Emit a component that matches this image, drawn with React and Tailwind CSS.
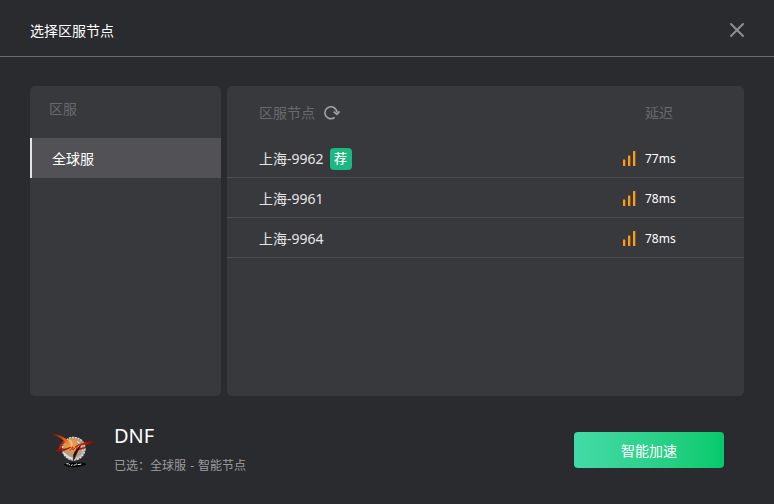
import { X } from 'lucide-react';

const regions = [{ id: 'global', name: '全球服' }];

const nodes = [
    { id: 1, name: '上海-9962', delay: 77, recommended: true },
    { id: 2, name: '上海-9961', delay: 78, recommended: false },
    { id: 3, name: '上海-9964', delay: 78, recommended: false },
];

const SignalIcon = () => (
    <svg width="13" height="16" viewBox="0 0 13 16" fill="#ff9c13" aria-hidden="true">
        <rect x="0" y="8.5" width="2.3" height="6.5" rx="0.5" />
        <rect x="5" y="4.5" width="2.3" height="10.5" rx="0.5" />
        <rect x="10" y="0" width="2.3" height="15" rx="0.5" />
    </svg>
);

const RefreshIcon = () => (
    <svg width="18" height="16" viewBox="0 0 18 16" fill="none" aria-hidden="true">
        <path d="M11.6 12.5A6 6 0 1 1 13.9 7.6" stroke="#a3a3a6" strokeWidth="1.6" />
        <path d="M10.6 6.6L13.9 9.4L16.6 6.4" stroke="#a3a3a6" strokeWidth="1.6" />
    </svg>
);

const GameLogo = () => (
    <svg width="48" height="40" viewBox="30 30 144 120" fill="none" aria-hidden="true">
        <defs>
            <radialGradient id="globe" cx="0.42" cy="0.35" r="0.65">
                <stop offset="0" stopColor="#f0a050" />
                <stop offset="0.5" stopColor="#cf965f" />
                <stop offset="0.8" stopColor="#b09c8c" />
                <stop offset="1" stopColor="#c9c5c1" />
            </radialGradient>
            <linearGradient id="slash" x1="36" y1="42" x2="84" y2="82" gradientUnits="userSpaceOnUse">
                <stop offset="0" stopColor="#7a0d05" />
                <stop offset="0.5" stopColor="#e0470c" />
                <stop offset="1" stopColor="#ff9a1c" />
            </linearGradient>
            <linearGradient id="wing" x1="84" y1="0" x2="168" y2="0" gradientUnits="userSpaceOnUse">
                <stop offset="0" stopColor="#b51c06" />
                <stop offset="0.5" stopColor="#c92308" />
                <stop offset="1" stopColor="#6d0703" />
            </linearGradient>
        </defs>
        <circle cx="101" cy="86" r="33" fill="url(#globe)" />
        <circle cx="101" cy="86" r="34" stroke="#dedbd8" strokeWidth="4" strokeDasharray="7 2" />
        <path d="M72 100Q82 112 97 116" stroke="#e6e2de" strokeWidth="5" />
        <path d="M112 64Q128 76 127 94" stroke="#dccabb" strokeWidth="5" />
        <path d="M88 60Q98 68 94 80" stroke="#f6bf7c" strokeWidth="5" />
        <path d="M34 41Q60 44 78 57Q90 67 88 82Q77 64 62 53Q50 47 34 41Z" fill="url(#slash)" stroke="url(#slash)" strokeWidth="1.5" />
        <path d="M73 64Q61 78 56 93" stroke="#c62a08" strokeWidth="7" />
        <path d="M48 93Q72 96 92 82Q76 90 56 87Z" fill="#9c1005" stroke="#9c1005" strokeWidth="2" />
        <path d="M90 92Q95 84 98 80L99 90Q106 82 112 78L109 90" stroke="#c62a08" strokeWidth="3" />
        <path d="M106 80Q126 64 168 65Q148 73 124 75Q114 76 106 80Z" fill="url(#wing)" stroke="url(#wing)" strokeWidth="2" />
        <path d="M108 90Q122 82 140 82Q128 88 108 90Z" fill="#c1240a" stroke="#8d1005" strokeWidth="2" />
        <path d="M122 76Q112 94 101 120Q98 104 106 94Z" fill="#1c0d0a" stroke="#2a0d08" strokeWidth="2" />
        <path d="M71 133Q90 126 112 128Q138 126 138 134Q120 142 98 142Q76 140 71 133Z" fill="#050506" />
        <path d="M79 131L86 132L90 136M94 138L97 133M101 136L107 134L111 131M113 134L124 132" stroke="#e6e6e6" strokeWidth="3" />
    </svg>
);

const App = () => {
    return (
        <div className="min-h-screen flex flex-col bg-[#2a2b2f] text-white text-sm font-['Noto_Sans','Noto_Sans_CJK_SC',sans-serif]">
            <header className="h-[57px] pl-[30px] pr-7 pt-1 flex items-center justify-between border-b border-[#6b6b6e]">
                <h1 className="pt-0.5">选择区服节点</h1>
                <button type="button" aria-label="关闭" className="text-[#8e8f92]">
                    <X size={18} viewBox="3 3 18 18" strokeWidth={2} />
                </button>
            </header>

            <main className="flex-1 flex gap-1.5 px-[30px] pt-[29px]">
                <nav className="w-[191px] shrink-0 rounded-[5px] bg-[#38393d]">
                    <h2 className="h-[52px] pl-[19px] pt-3 leading-[22px] text-[#68696d]">区服</h2>
                    {regions.map((region) => (
                        <button
                            key={region.id}
                            type="button"
                            className="w-full h-10 pl-5 pt-0.5 text-left bg-[#525155] border-l-2 border-[#e4e4e4]"
                        >
                            {region.name}
                        </button>
                    ))}
                </nav>

                <section className="flex-1 rounded-[5px] bg-[#38393d]">
                    <table className="w-full table-fixed border-separate border-spacing-0">
                        <thead>
                            <tr className="h-[52px] text-left text-[#68696d]">
                                <th className="p-0 pt-0.5 pl-8 font-normal">
                                    <div className="flex items-center gap-2">
                                        区服节点
                                        <button type="button" aria-label="刷新">
                                            <RefreshIcon />
                                        </button>
                                    </div>
                                </th>
                                <th className="w-[121px] p-0 pt-0.5 pl-[22px] font-normal">延迟</th>
                            </tr>
                        </thead>
                        <tbody>
                            {nodes.map((node) => (
                                <tr key={node.id} className="h-10">
                                    <td className="p-0 pt-0.5 pl-8 border-b border-[#4b4c50] text-[#e6e6e6]">
                                        <div className="flex items-center gap-1.5">
                                            {node.name}
                                            {node.recommended && (
                                                <span className="size-[22px] rounded bg-[#19b981] text-white text-[13px] font-medium flex items-center justify-center">
                                                    荐
                                                </span>
                                            )}
                                        </div>
                                    </td>
                                    <td className="p-0 pt-0.5 border-b border-[#4b4c50] text-xs">
                                        <div className="flex items-center gap-[9px]">
                                            <SignalIcon />
                                            {node.delay}ms
                                        </div>
                                    </td>
                                </tr>
                            ))}
                        </tbody>
                    </table>
                </section>
            </main>

            <footer className="h-[108px] px-[50px] flex items-center gap-4">
                <GameLogo />
                <div className="flex-1 pt-1">
                    <p className="text-xl leading-7">DNF</p>
                    <p className="text-xs leading-8 text-[#9c9c9f]">
                        已选：全球服 <span className="mx-px">-</span> 智能节点
                    </p>
                </div>
                <button
                    type="button"
                    className="w-[150px] h-9 pt-0.5 rounded bg-linear-to-r from-[#43daa8] to-[#03c96c]"
                >
                    智能加速
                </button>
            </footer>
        </div>
    );
};

export default App;
